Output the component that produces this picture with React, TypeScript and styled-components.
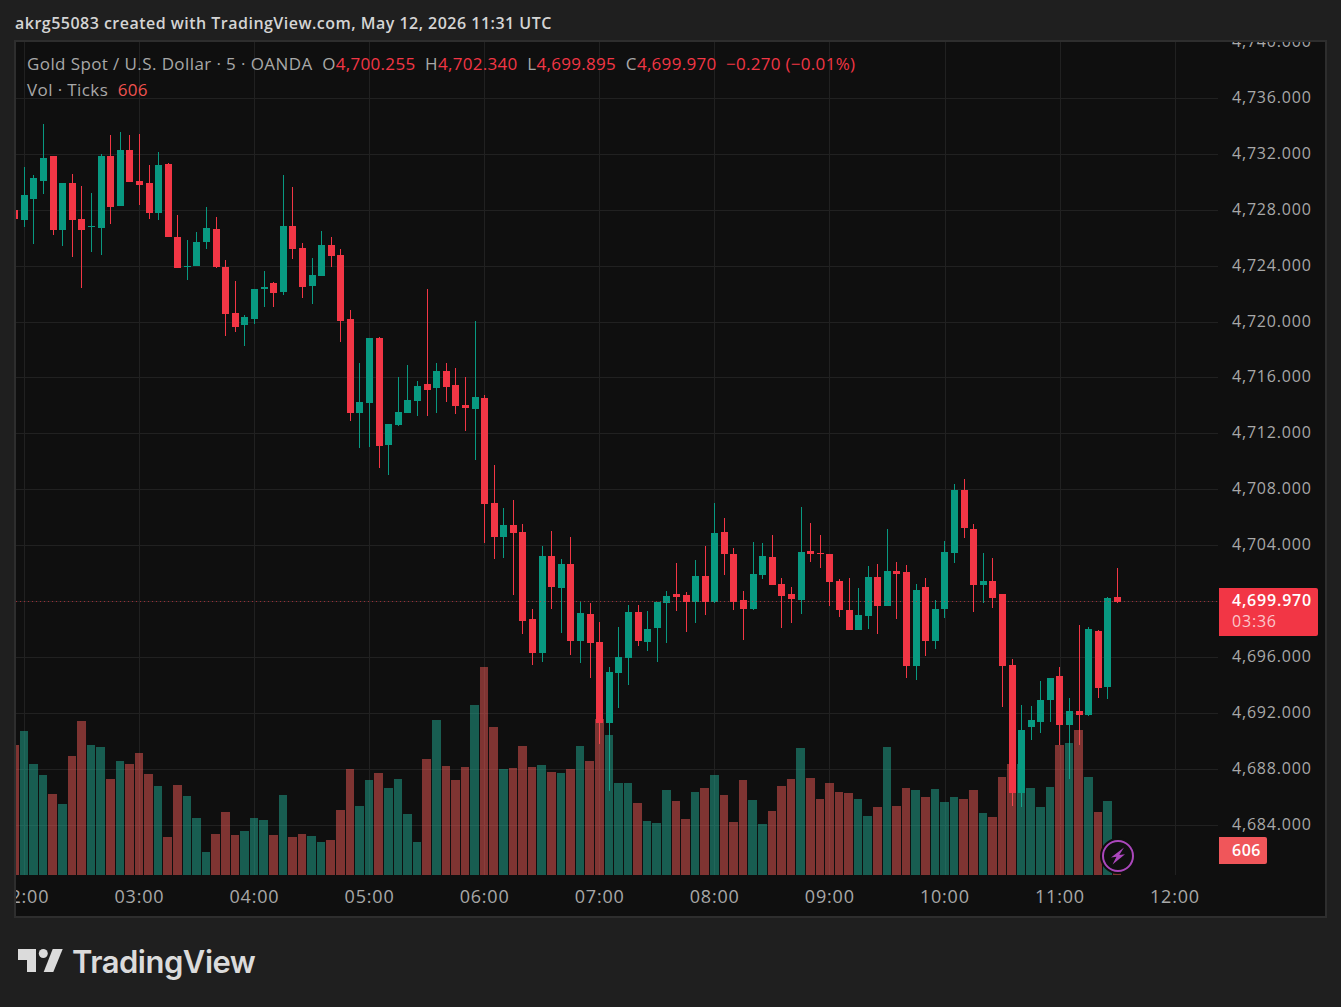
import React from 'react';
import styled, { createGlobalStyle } from 'styled-components';

const GlobalStyle = createGlobalStyle`
  html, body {
    margin: 0;
    padding: 0;
    background-color: #1f1f1f;
  }
`

const Page = styled.div`
  width: 1341px;
  height: 1007px;
  display: flex;
  flex-direction: column;
  background-color: #1f1f1f;
  font-family: "Open Sans", "Noto Sans", sans-serif;
  overflow: hidden;
`
const Header = styled.div`
  height: 40px;
  padding: 5px 0 0 15px;
  box-sizing: border-box;
  display: flex;
  align-items: center;
  color: #d4d4d4;
  font-size: 16px;
  font-weight: 600;
  letter-spacing: 0.48px;
`
const Frame = styled.div`
  margin: 0 14px;
  width: 1313px;
  height: 878px;
  box-sizing: border-box;
  border: 2px solid #2e2e2e;
  background-color: #0f0f0f;
  display: grid;
  grid-template-columns: 1202px 107px;
  grid-template-rows: 833px 41px;
`
const Pane = styled.div`
  position: relative;
  overflow: hidden;
`
const ChartSvg = styled.svg`
  display: block;
  shape-rendering: crispEdges;
`
const Legend = styled.div`
  position: absolute;
  left: 11px;
  top: 11px;
  display: flex;
  flex-direction: column;
  gap: 4px;
  font-size: 17px;
  line-height: 22px;
  letter-spacing: 0.4px;
  color: #a8a8a8;
`
const LegendRow = styled.div`
  display: flex;
  white-space: pre;
`
const Value = styled.span<{ $tone: 'red' | 'soft' }>`
  color: ${p => (p.$tone === 'red' ? '#f23645' : '#ef5350')};
  letter-spacing: 0.3px;
`
const PriceAxis = styled.div`
  position: relative;
  overflow: hidden;
`
const PriceTicks = styled.div`
  margin-top: -29px;
  display: flex;
  flex-direction: column;
`
const PriceTick = styled.div`
  height: 55.93px;
  padding-left: 14px;
  display: flex;
  align-items: center;
  color: #a8a8a8;
  font-size: 16px;
  font-weight: 500;
  letter-spacing: 0.8px;
`
const PriceBadge = styled.div`
  position: absolute;
  left: 1px;
  top: 546px;
  width: 99px;
  height: 48px;
  box-sizing: border-box;
  padding: 2px 0 0 13px;
  background-color: #f23645;
  border-radius: 0 2px 2px 0;
  color: #ffffff;
  font-size: 16px;
  font-weight: 600;
  line-height: 21px;
  letter-spacing: 0.8px;
`
const Countdown = styled.div`
  color: #fbc6cb;
  font-weight: 500;
`
const VolumeBadge = styled.div`
  position: absolute;
  left: 1px;
  top: 795px;
  width: 48px;
  height: 27px;
  box-sizing: border-box;
  padding-left: 13px;
  background-color: #f0565a;
  border-radius: 0 2px 2px 0;
  color: #ffffff;
  font-size: 16px;
  font-weight: 600;
  line-height: 27px;
  letter-spacing: 0.5px;
`
const TimeAxis = styled.div`
  grid-column: 1 / 3;
  display: flex;
  overflow: hidden;
`
const TimeTick = styled.div`
  flex: 0 0 115.07px;
  text-align: center;
  color: #a8a8a8;
  font-size: 18px;
  font-weight: 500;
  letter-spacing: 0.8px;
  line-height: 42px;
  &:first-child {
    margin-left: -49.2px;
  }
`
const Flash = styled.svg`
  position: absolute;
  left: 1083px;
  top: 795px;
`
const Footer = styled.div`
  flex: 1;
  padding: 31px 0 0 18px;
  display: flex;
  align-items: flex-start;
  gap: 9px;
  color: #dbdbdb;
`
const Wordmark = styled.div`
  font-family: Inter, "Open Sans", sans-serif;
  font-size: 31px;
  font-weight: 600;
  line-height: 26px;
  letter-spacing: -0.5px;
`

// values are read off a 3x crop of the chart, so they divide by 3 to whole pixels
// kind, body top, body bottom, wick top, wick bottom, volume top (from y=660)
type Bar = [string, number, number, number, number, number];

const bars: Bar[] = [
  ['r', 630, 657, 630, 657, 255],
  ['g', 585, 660, 501, 681, 213],
  ['g', 534, 597, 525, 732, 312],
  ['g', 474, 543, 372, 582, 345],
  ['r', 468, 690, 468, 705, 402],
  ['g', 549, 690, 549, 738, 432],
  ['r', 549, 660, 522, 771, 288],
  ['r', 657, 690, 558, 864, 183],
  ['g', 678, 681, 579, 756, 255],
  ['g', 468, 684, 462, 765, 261],
  ['r', 468, 621, 405, 672, 357],
  ['g', 450, 618, 396, 618, 303],
  ['r', 450, 546, 405, 546, 312],
  ['r', 543, 555, 402, 615, 279],
  ['r', 549, 639, 495, 657, 342],
  ['g', 495, 639, 456, 660, 378],
  ['r', 492, 711, 489, 711, 531],
  ['r', 711, 804, 645, 804, 375],
  ['g', 798, 801, 720, 840, 408],
  ['g', 726, 798, 696, 798, 474],
  ['g', 684, 726, 621, 747, 576],
  ['r', 687, 801, 651, 804, 522],
  ['r', 801, 942, 780, 1008, 456],
  ['r', 939, 981, 843, 996, 525],
  ['g', 951, 975, 945, 1038, 513],
  ['g', 867, 957, 867, 972, 474],
  ['g', 861, 867, 813, 921, 480],
  ['r', 849, 879, 846, 921, 525],
  ['g', 678, 876, 525, 885, 405],
  ['r', 678, 747, 561, 777, 531],
  ['r', 744, 861, 729, 894, 522],
  ['g', 825, 858, 774, 912, 528],
  ['g', 735, 828, 693, 828, 546],
  ['r', 735, 768, 711, 801, 540],
  ['r', 765, 963, 747, 1026, 450],
  ['r', 957, 1239, 930, 1263, 327],
  ['g', 1206, 1239, 1089, 1344, 438],
  ['g', 1014, 1209, 1014, 1341, 360],
  ['r', 1014, 1338, 1011, 1404, 339],
  ['g', 1272, 1335, 1272, 1425, 384],
  ['g', 1236, 1275, 1131, 1278, 357],
  ['g', 1200, 1239, 1095, 1239, 462],
  ['g', 1158, 1203, 1143, 1248, 546],
  ['r', 1152, 1170, 867, 1248, 297],
  ['g', 1113, 1164, 1089, 1239, 180],
  ['r', 1113, 1161, 1089, 1206, 318],
  ['r', 1155, 1218, 1104, 1242, 360],
  ['r', 1215, 1224, 1131, 1293, 321],
  ['g', 1191, 1227, 963, 1380, 135],
  ['r', 1194, 1512, 1185, 1629, 21],
  ['r', 1509, 1611, 1395, 1677, 201],
  ['g', 1575, 1611, 1524, 1674, 327],
  ['r', 1575, 1599, 1500, 1785, 324],
  ['r', 1596, 1863, 1572, 1902, 258],
  ['r', 1857, 1959, 1827, 1995, 321],
  ['g', 1668, 1959, 1638, 1986, 315],
  ['r', 1668, 1761, 1593, 1827, 336],
  ['g', 1692, 1764, 1677, 1899, 339],
  ['r', 1692, 1923, 1611, 1965, 327],
  ['g', 1839, 1923, 1806, 1989, 258],
  ['r', 1842, 1929, 1809, 2034, 303],
  ['r', 1926, 2169, 1866, 2232, 178],
  ['g', 2016, 2169, 2001, 2373, 225],
  ['g', 1971, 2019, 1881, 2124, 369],
  ['g', 1836, 1974, 1815, 2055, 369],
  ['r', 1836, 1923, 1815, 1938, 429],
  ['g', 1887, 1926, 1833, 1953, 483],
  ['g', 1806, 1884, 1806, 1986, 489],
  ['g', 1788, 1809, 1773, 1929, 390],
  ['r', 1782, 1791, 1689, 1833, 423],
  ['r', 1785, 1806, 1776, 1896, 477],
  ['g', 1728, 1806, 1680, 1869, 396],
  ['r', 1728, 1806, 1638, 1845, 384],
  ['g', 1599, 1806, 1509, 1809, 345],
  ['r', 1596, 1662, 1554, 1725, 405],
  ['r', 1662, 1806, 1644, 1830, 486],
  ['r', 1800, 1827, 1773, 1920, 360],
  ['g', 1722, 1827, 1626, 1830, 420],
  ['g', 1668, 1725, 1629, 1737, 492],
  ['r', 1671, 1755, 1605, 1755, 453],
  ['r', 1752, 1788, 1734, 1884, 378],
  ['r', 1782, 1797, 1761, 1869, 357],
  ['g', 1656, 1800, 1521, 1842, 264],
  ['r', 1653, 1662, 1569, 1686, 354],
  ['r', 1659, 1662, 1605, 1704, 417],
  ['r', 1662, 1746, 1662, 1818, 369],
  ['r', 1743, 1830, 1737, 1851, 396],
  ['r', 1830, 1890, 1734, 1890, 399],
  ['g', 1845, 1890, 1764, 1890, 417],
  ['g', 1731, 1848, 1698, 1887, 468],
  ['r', 1731, 1818, 1692, 1902, 441],
  ['g', 1713, 1818, 1587, 1818, 261],
  ['r', 1713, 1722, 1686, 1857, 438],
  ['r', 1716, 1998, 1695, 2034, 384],
  ['g', 1770, 1998, 1752, 2040, 390],
  ['r', 1761, 1923, 1734, 1968, 411],
  ['g', 1827, 1923, 1800, 1947, 387],
  ['g', 1656, 1827, 1623, 1854, 426],
  ['g', 1470, 1659, 1452, 1689, 411],
  ['r', 1470, 1584, 1437, 1614, 417],
  ['r', 1587, 1755, 1572, 1836, 390],
  ['g', 1743, 1755, 1659, 1809, 459],
  ['r', 1743, 1794, 1674, 1824, 471],
  ['r', 1782, 1998, 1782, 2121, 351],
  ['r', 1995, 2379, 1977, 2418, 312],
  ['g', 2190, 2379, 2115, 2421, 312],
  ['g', 2160, 2181, 2118, 2220, 384],
  ['g', 2100, 2166, 2043, 2199, 441],
  ['g', 2034, 2100, 2034, 2166, 381],
  ['r', 2028, 2175, 2001, 2235, 255],
  ['g', 2133, 2175, 2094, 2337, 249],
  ['r', 2133, 2145, 1875, 2235, 210],
  ['g', 1887, 2145, 1881, 2148, 351],
  ['r', 1893, 2064, 1890, 2094, 456],
  ['g', 1794, 2061, 1791, 2097, 423],
  ['r', 1791, 1806, 1704, 1809, 636],
];

const firstIndex = -1;
const barStep = 9.5892;
const barCenter = (i: number) => 24.36 + (i + firstIndex) * barStep;
const gridRows = [98, 154, 210, 266, 322, 377, 433, 489, 545, 601, 657, 713, 769, 825];
const gridCols = [24, 139, 254, 369, 484, 599, 714, 829, 945, 1060, 1175];
const prices = [
  '4,740.000', '4,736.000', '4,732.000', '4,728.000', '4,724.000', '4,720.000', '4,716.000', '4,712.000',
  '4,708.000', '4,704.000', '', '4,696.000', '4,692.000', '4,688.000', '4,684.000',
];
const hours = ['02:00', '03:00', '04:00', '05:00', '06:00', '07:00', '08:00', '09:00', '10:00', '11:00', '12:00'];

const colors: Record<string, string> = { r: '#f23645', g: '#089981' };
const volumeColors: Record<string, string> = { r: 'rgba(240,90,85,0.5)', g: 'rgba(34,171,148,0.5)' };

function Chart() {
  return (
    <ChartSvg width="1202" height="833" viewBox="16 42 1202 833">
      {gridRows.map(y => <rect key={y} x="16" y={y} width="1202" height="1" fill="#212121" />)}
      {gridCols.map(x => <rect key={x} x={x} y="42" width="1" height="833" fill="#212121" />)}
      {bars.map((b, i) => {
        const left = Math.round(barCenter(i) - 3.5);
        return <rect key={i} x={left + 3} y={b[3] / 3} width="1" height={(b[4] - b[3]) / 3} fill={colors[b[0]]} />;
      })}
      {bars.map((b, i) => {
        const left = Math.floor(barCenter(i) - 4.25);
        const next = Math.floor(barCenter(i + 1) - 4.25);
        const top = 660 + b[5] / 3;
        return <rect key={i} x={left} y={top} width={next - left - 1} height={875 - top} fill={volumeColors[b[0]]} />;
      })}
      {bars.map((b, i) => {
        const left = Math.round(barCenter(i) - 3.5);
        return <rect key={i} x={left} y={b[1] / 3} width="7" height={(b[2] - b[1]) / 3} fill={colors[b[0]]} />;
      })}
      <line x1="16" y1="601.5" x2="1218" y2="601.5" stroke="#f23645" strokeOpacity="0.6" strokeDasharray="1 3" />
    </ChartSvg>
  );
}

function FlashIcon() {
  return (
    <Flash width="38" height="38" viewBox="0 0 38 38">
      <circle cx="19" cy="19" r="18" fill="#0f0f0f" />
      <circle cx="19" cy="19" r="15" fill="#0f0f0f" stroke="#ab47bc" strokeWidth="2" />
      <polygon points="25,10.5 12,20.5 17.5,19.7 13.5,27.5 26,17.2 20.3,18" fill="#ab47bc" />
    </Flash>
  );
}

function Logo() {
  return (
    <svg width="45" height="23" viewBox="0 0 45 23">
      <path d="M0 0H18V23H9V11H0Z" fill="#dbdbdb" />
      <circle cx="25.3" cy="4.5" r="4.5" fill="#dbdbdb" />
      <path d="M34.7 0H44.7L35.3 23H25.7Z" fill="#dbdbdb" />
    </svg>
  );
}

function App() {
  return (
    <Page>
      <GlobalStyle />
      <Header>akrg55083 created with TradingView.com, May 12, 2026 11:31 UTC</Header>
      <Frame>
        <Pane>
          <Chart />
          <Legend>
            <LegendRow>
              {'Gold Spot / U.S. Dollar · 5 · OANDA  O'}<Value $tone="red">4,700.255</Value>
              {'  H'}<Value $tone="red">4,702.340</Value>
              {'  L'}<Value $tone="red">4,699.895</Value>
              {'  C'}<Value $tone="red">4,699.970</Value>
              <Value $tone="red">{'  −0.270 (−0.01%)'}</Value>
            </LegendRow>
            <LegendRow>
              {'Vol · Ticks  '}<Value $tone="soft">606</Value>
            </LegendRow>
          </Legend>
          <FlashIcon />
        </Pane>
        <PriceAxis>
          <PriceTicks>
            {prices.map((p, i) => <PriceTick key={i}>{p}</PriceTick>)}
          </PriceTicks>
          <PriceBadge>
            4,699.970
            <Countdown>03:36</Countdown>
          </PriceBadge>
          <VolumeBadge>606</VolumeBadge>
        </PriceAxis>
        <TimeAxis>
          {hours.map(h => <TimeTick key={h}>{h}</TimeTick>)}
        </TimeAxis>
      </Frame>
      <Footer>
        <Logo />
        <Wordmark>TradingView</Wordmark>
      </Footer>
    </Page>
  );
}

export default App;
